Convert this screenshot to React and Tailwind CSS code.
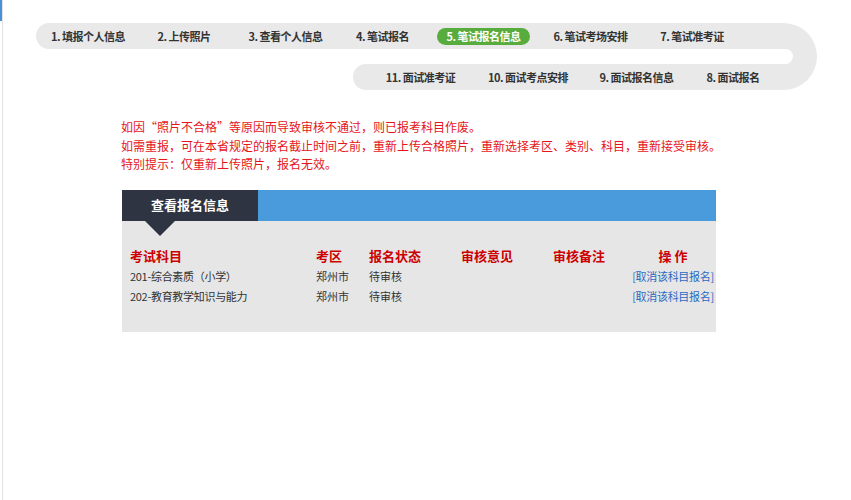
import { Fragment } from "react";

export default function App() {
  const row1 = [
    ["1. 填报个人信息", "w-[104px]"],
    ["2. 上传照片", "w-[88px]"],
    ["3. 查看个人信息", "w-[115px]"],
    ["4. 笔试报名", "w-[79px]"],
  ];
  const row1b = [
    ["6. 笔试考场安排", "w-[91px]"],
    ["7. 笔试准考证", "w-[112px]"],
  ];
  const row2 = [
    ["11. 面试准考证", "w-[135px]"],
    ["10. 面试考点安排", "w-[79px]"],
    ["9. 面试报名信息", "w-[139px]"],
    ["8. 面试报名", "w-[54px]"],
  ];
  const rows = [
    ["201-综合素质（小学）", "郑州市", "待审核"],
    ["202-教育教学知识与能力", "郑州市", "待审核"],
  ];
  return (
    <div className="flex min-h-[500px] bg-white font-['Noto_Sans_CJK_SC','Noto_Sans',sans-serif]">
      <div className="w-[2px] shrink-0">
        <div className="h-[21px] bg-[#4a90d9]" />
      </div>
      <div className="flex-1 border-l border-[#e2e2e2]">
        {/* step navigation */}
        <div className="ml-[33px] mt-[23px] flex h-[67px] w-[781px]">
          <div className="flex w-[747px] flex-col">
            <div className="flex h-[26px] items-center rounded-l-full bg-[#e9e9e9] text-[11px] font-bold tracking-[-0.5px] text-[#333]">
              {row1.map(([t, w]) => (
                <div key={t} className={`${w} whitespace-nowrap text-center`}>{t}</div>
              ))}
              <div className="flex w-[123px] justify-center">
                <div className="flex h-[17px] w-[93px] items-center justify-center rounded-full bg-[#58ab3d] text-white">
                  5. 笔试报名信息
                </div>
              </div>
              {row1b.map(([t, w]) => (
                <div key={t} className={`${w} whitespace-nowrap text-center`}>{t}</div>
              ))}
            </div>
            <div className="h-[15px]" />
            <div className="ml-[317px] flex h-[26px] items-center rounded-l-full bg-[#e9e9e9] text-[11px] font-bold tracking-[-0.5px] text-[#333]">
              {row2.map(([t, w]) => (
                <div key={t} className={`${w} whitespace-nowrap text-center`}>{t}</div>
              ))}
            </div>
          </div>
          <div className="flex w-[34px] flex-col rounded-r-[34px] bg-[#e9e9e9]">
            <div className="h-[26px]" />
            <div className="h-[15px] w-[10px] rounded-r-full bg-white" />
          </div>
        </div>

        {/* notice */}
        <div className="ml-[118px] mt-[28px] text-[12px] leading-[18.5px] text-[#e5161b]">
          <p>如因“照片不合格”等原因而导致审核不通过，则已报考科目作废。</p>
          <p>如需重报，可在本省规定的报名截止时间之前，重新上传合格照片，重新选择考区、类别、科目，重新接受审核。</p>
          <p>特别提示：仅重新上传照片，报名无效。</p>
        </div>

        {/* table panel */}
        <div className="ml-[119px] mt-[16px] w-[594px]">
          <div className="flex h-[31px] bg-[#4a9bdb]">
            <div className="flex w-[136px] items-center justify-center bg-[#2e3441] text-[13px] font-bold text-white">
              查看报名信息
            </div>
          </div>
          <div className="h-[111px] bg-[#e6e6e6]">
            <div className="ml-[23px] h-0 w-0 border-l-[15px] border-r-[15px] border-t-[15px] border-l-transparent border-r-transparent border-t-[#2e3441]" />
            <div className="mt-[10px] grid grid-cols-[186px_53px_92px_92px_77px_86px] pl-[8px]">
              <div className="text-[13px] font-bold leading-[20px] text-[#cc0000]">考试科目</div>
              <div className="text-[13px] font-bold leading-[20px] text-[#cc0000]">考区</div>
              <div className="text-[13px] font-bold leading-[20px] text-[#cc0000]">报名状态</div>
              <div className="text-[13px] font-bold leading-[20px] text-[#cc0000]">审核意见</div>
              <div className="text-[13px] font-bold leading-[20px] text-[#cc0000]">审核备注</div>
              <div className="text-center text-[13px] font-bold leading-[20px] text-[#cc0000]">操&nbsp;作</div>
              {rows.map((r) => (
                <Fragment key={r[0]}>
                  <div className="whitespace-nowrap text-[11px] leading-[20px] tracking-[-0.3px] text-[#333]">{r[0]}</div>
                  <div className="text-[11px] leading-[20px] text-[#333]">{r[1]}</div>
                  <div className="text-[11px] leading-[20px] text-[#333]">{r[2]}</div>
                  <div />
                  <div />
                  <div className="whitespace-nowrap text-center text-[11px] leading-[20px] tracking-[-0.3px] text-[#2a6ac2]">[取消该科目报名]</div>
                </Fragment>
              ))}
            </div>
          </div>
        </div>
      </div>
    </div>
  );
}
